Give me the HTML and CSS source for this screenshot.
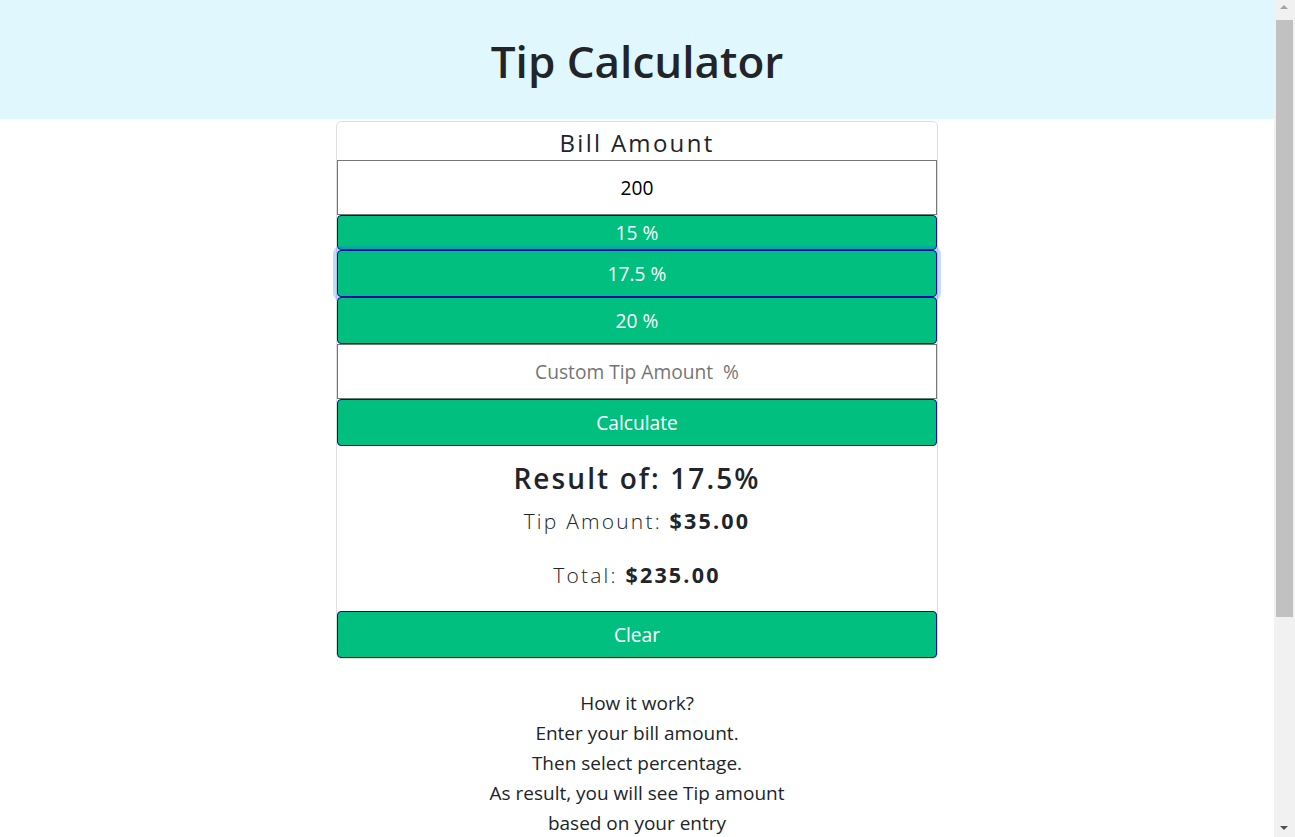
FILE: index.html
```html
<!DOCTYPE html>
<html lang="en">
<head>
<meta charset="utf-8">
<title>Tip Calculator</title>
<link rel="stylesheet" href="styles.css">
</head>
<body>
<div class="page">
  <header class="top">
    <h1 class="title">Tip Calculator</h1>
  </header>
  <main class="wrap">
    <section class="card">
      <h2 class="label">Bill Amount</h2>
      <input class="field field-bill" type="text" value="200">
      <button class="btn btn-first">15 %</button>
      <button class="btn btn-focus">17.5 %</button>
      <button class="btn">20 %</button>
      <input class="field" type="text" placeholder="Custom Tip Amount  %">
      <button class="btn">Calculate</button>
      <div class="result">
        <h3 class="result-title">Result of: 17.5%</h3>
        <p class="line">Tip Amount: <strong>$35.00</strong></p>
        <p class="line">Total: <strong>$235.00</strong></p>
      </div>
      <button class="btn">Clear</button>
    </section>
    <section class="help">
      <p>How it work?</p>
      <p>Enter your bill amount.</p>
      <p>Then select percentage.</p>
      <p>As result, you will see Tip amount</p>
      <p>based on your entry</p>
    </section>
  </main>
</div>
<div class="scrollbar" aria-hidden="true">
  <span class="arrow arrow-up"></span>
  <span class="thumb"></span>
  <span class="arrow arrow-down"></span>
</div>
</body>
</html>
```

FILE: styles.css
```css
* { box-sizing: border-box; }
html, body { margin: 0; padding: 0; }
body {
  font-family: "Open Sans", "Noto Sans", sans-serif;
  color: #212529;
  background: #fff;
}
.page { margin-right: 21px; }
.top {
  background: #e1f7fe;
  height: 119px;
  display: flex;
  align-items: center;
  justify-content: center;
  padding-top: 3px;
}
.title {
  margin: 0;
  font-size: 44px;
  font-weight: 600;
  line-height: 1.2;
}
.wrap {
  width: 602px;
  margin: 2px auto 0;
  padding-bottom: 280px;
}
.card {
  border: 1px solid #dedede;
  border-radius: 5px;
  display: flex;
  flex-direction: column;
}
.label {
  margin: 0;
  height: 38px;
  font-size: 24px;
  font-weight: 400;
  letter-spacing: 2.3px;
  text-align: center;
  line-height: 42px;
}
.field {
  display: block;
  width: 100%;
  height: 55px;
  margin: 0;
  border: 1px solid #767676;
  border-radius: 0;
  font-family: inherit;
  font-size: 19.2px;
  text-align: center;
  color: #000;
  background: #fff;
  outline: none;
}
.field::placeholder { color: #757575; }
.btn {
  display: block;
  width: 100%;
  height: 47px;
  margin: 0;
  padding: 0;
  border: 1px solid #0a0aa8;
  border-radius: 4px;
  background: #00bf7f;
  color: #fff;
  font-family: inherit;
  font-size: 19.2px;
  line-height: 1;
}
.btn-first { height: 35px; }
.btn-focus { box-shadow: 0 0 0 4px rgba(13, 110, 253, 0.25); }
.result {
  padding: 12px 0 21px;
  text-align: center;
}
.result-title {
  margin: 0 0 8px;
  font-size: 28px;
  font-weight: 600;
  letter-spacing: 2.1px;
  line-height: 40px;
}
.line {
  margin: 0 0 24px;
  font-size: 21px;
  font-weight: 300;
  letter-spacing: 2.2px;
  line-height: 30px;
}
.line:last-child { margin-bottom: 0; }
.line strong { font-weight: 700; font-size: 21.5px; }
.help {
  margin-top: 29px;
  text-align: center;
  font-size: 19px;
  line-height: 30px;
}
.help p { margin: 0; }

.scrollbar {
  position: fixed;
  top: 0;
  right: 0;
  width: 21px;
  height: 100vh;
  background: #f1f1f1;
}
.thumb {
  position: absolute;
  left: 2px;
  right: 2px;
  top: 20px;
  height: 597px;
  background: #c1c1c1;
}
.arrow {
  position: absolute;
  left: 6px;
  width: 0;
  height: 0;
  border-left: 4px solid transparent;
  border-right: 4px solid transparent;
}
.arrow-up {
  top: 5px;
  border-bottom: 4px solid #a3a3a3;
}
.arrow-down {
  bottom: 7px;
  border-top: 4px solid #505050;
}
```
